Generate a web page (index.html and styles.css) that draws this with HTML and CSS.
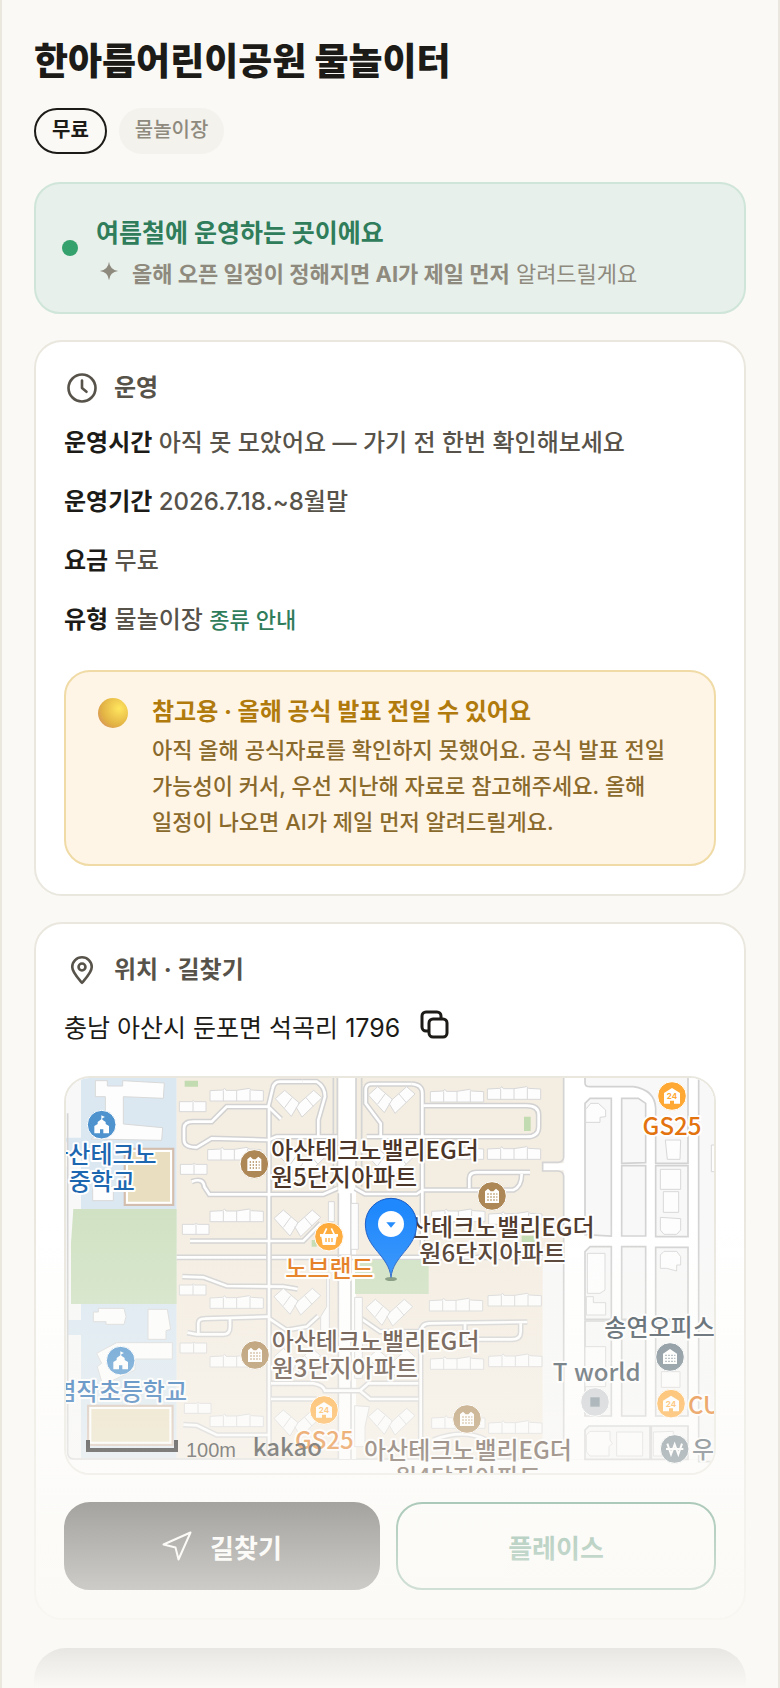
FILE: index.html
```html
<!DOCTYPE html>
<html lang="ko">
<head>
    <meta charset="UTF-8">
    <meta name="viewport" content="width=device-width, initial-scale=1.0">
    <title>한아름어린이공원 물놀이터</title>
    <link rel="stylesheet" href="styles.css">
</head>
<body>
    <main class="page">
        <h1>한아름어린이공원 물놀이터</h1>
        <div class="tags">
            <span class="tag tag-free">무료</span>
            <span class="tag">물놀이장</span>
        </div>

        <section class="status">
            <span class="status-dot"></span>
            <div>
                <p class="status-title">여름철에 운영하는 곳이에요</p>
                <p class="status-sub">
                    <svg class="spark" viewBox="0 0 24 24"><path d="M12 2 Q13 11 22 12 Q13 13 12 22 Q11 13 2 12 Q11 11 12 2 Z"/></svg>
                    <span><b>올해 오픈 일정이 정해지면 AI가 제일 먼저</b> 알려드릴게요</span>
                </p>
            </div>
        </section>

        <section class="card">
            <h2>
                <svg class="icon" viewBox="0 0 24 24"><circle cx="12" cy="12" r="9"/><path d="M12 7v5l3 2.500"/></svg>
                운영
            </h2>
            <div class="rows">
                <p><b>운영시간</b> 아직 못 모았어요 — 가기 전 한번 확인해보세요</p>
                <p><b>운영기간</b> 2026.7.18.~8월말</p>
                <p><b>요금</b> 무료</p>
                <p><b>유형</b> 물놀이장 <a href="#types">종류 안내</a></p>
            </div>
            <div class="notice">
                <span class="orb"></span>
                <div>
                    <p class="notice-title">참고용 · 올해 공식 발표 전일 수 있어요</p>
                    <p class="notice-text">아직 올해 공식자료를 확인하지 못했어요. 공식 발표 전일 가능성이 커서, 우선 지난해 자료로 참고해주세요. 올해 일정이 나오면 AI가 제일 먼저 알려드릴게요.</p>
                </div>
            </div>
        </section>

        <section class="card">
            <h2>
                <svg class="icon" viewBox="0 0 24 24"><path d="M12 20.500C9 17 5.500 13.500 5.500 10a6.500 6.500 0 0 1 13 0c0 3.500-3.500 7-6.500 10.500z"/><circle cx="12" cy="10" r="2.300"/></svg>
                위치 · 길찾기
            </h2>
            <div class="address">
                <span>충남 아산시 둔포면 석곡리 1796</span>
                <button type="button" class="copy" aria-label="주소 복사">
                    <svg viewBox="0 0 30 30"><rect x="9" y="9" width="18" height="18" rx="4"/><path d="M9 21H6a4 4 0 0 1-4-4V6a4 4 0 0 1 4-4h11a4 4 0 0 1 4 4v3"/></svg>
                </button>
            </div>

            <div class="map">
                <svg viewBox="48 54 1944 1185" preserveAspectRatio="xMidYMid slice">
                    <defs>
                        <g id="row4"><path d="M0 7 L38 5 L44 0 L48 6 H80 L118 0 L124 5 L160 7 V38 H0 Z M40 6 V38 M80 6 V38 M120 4 V38"/></g>
                        <g id="row2"><path d="M0 3 H36 L42 0 L46 3 H80 V33 H0 Z M41 3 V33"/></g>
                        <g id="vee"><path d="M0 25 L28 0 L72 38 L48 78 Z M28 52 L50 22 M68 42 L115 0 L140 22 L80 80 L62 50 M92 22 L114 48"/></g>
                        <g id="apt"><circle r="43"/><path class="glyph" d="M-21 21 V-14 L-12 -22 L-4 -14 H4 L12 -22 L21 -14 V21 Z"/><path class="dots" d="M-14 -6 H16 M-14 3 H16 M-14 12 H16"/></g>
                        <g id="school"><circle r="43"/><path class="glyph" d="M-22 26 V4 L-12 -2 V-8 L-1 -16 V-28 L10 -23 L2 -19 V-15 L12 -8 V-2 L22 4 V26 H5 V14 H-5 V26 Z"/></g>
                        <g id="store"><circle r="43"/><path class="glyph" d="M-24 23 V-9 L0 -24 L24 -9 V23 H6 V14 H-6 V23 Z"/></g>
                        <g id="roads">
                            <path d="M757 65 H690 Q672 65 668 85 L655 140 H530 L485 185 H430 Q402 185 402 205 V240 Q402 262 440 262 L485 235 L655 240 L680 230 H862"/>
                            <path d="M657 140 V1190 M655 140 L693 177"/>
                            <path d="M757 65 H800 Q825 80 825 110 L805 180 V228"/>
                            <path d="M425 365 Q460 352 463 380 L478 403 H820 L862 385"/>
                            <path d="M420 543 H760 L812 490"/>
                            <path d="M397 650 L460 652 L530 678 L700 680 L743 687"/>
                            <path d="M412 818 L440 823 H520 Q540 823 540 800 V778 M445 820 V790 Q445 776 465 776 L655 770"/>
                            <path d="M657 775 L710 810 L770 800 L805 768"/>
                            <path d="M400 1094 L440 1096 L500 1125 H655"/>
                            <path d="M663 970 H790 Q820 975 825 992 H930 L955 970 H1105 M663 1017 H800 M930 992 L960 1017 H1105"/>
                            <path d="M1085 72 H965 Q945 72 947 95 V130 L992 190 V230"/>
                            <path d="M1085 72 Q1117 74 1117 100 V560"/>
                            <path d="M1120 137 H1430 Q1466 137 1466 165 V200 Q1466 230 1430 230 H950"/>
                            <path d="M915 385 L945 402 H1100 L1118 390 H1390 Q1415 380 1415 342 M1258 385 V355 Q1258 337 1280 337 H1440"/>
                            <path d="M925 770 L990 815 H1110"/>
                            <path d="M1112 1190 V820 Q1112 790 1140 790 L1432 786 M1245 790 V838 H1385 Q1412 838 1412 815 V788"/>
                            <path d="M1150 1140 Q1240 1105 1310 1140"/>
                        </g>
                    </defs>

                    <!-- ground -->
                    <rect class="ground" x="48" y="54" width="1944" height="1185"/>
                    <path class="school-area" d="M93 54 H380 V447 H93 V290 H48 V233 H93 Z M93 732 H380 V1195 H93 V825 H53 V780 H93 Z"/>
                    <path class="beige" d="M380 54 H1540 V560 H1478 V1195 H380 Z"/>
                    <path class="green" d="M70 447 H380 V732 H63 V550 Z"/>
                    <path class="field" d="M224 266 H370 V435 H224 Z M114 1037 H368 V1155 H114 Z"/>
                    <path class="field-edge" d="M231 273 H363 V428 H231 Z M121 1044 H361 V1148 H121 Z"/>
                    <path class="lawn" d="M404 62 H444 V80 H404 Z M1422 170 H1442 V213 H1422 Z M1415 527 H1454 V547 H1415 Z M785 540 H800 V560 H785 Z"/>

                    <!-- streets -->
                    <path class="line" d="M53 160 V1180 Q55 1197 72 1197 H1478"/>
                    <path class="white" d="M53 1200 H1992 V1239 H53 Z M1543 54 H1992 V1197 H1543 Z M1478 310 H1545 V331 H1478 Z M865 54 H918 V1197 H865 Z"/>
                    <path class="cross-case" d="M380 592 H1478"/>
                    <path class="cross" d="M380 592 H1478"/>
                    <path class="line" d="M850 54 V390 M862 54 V380 M918 54 V380 M935 54 V380 M865 400 V1197 M903 400 V1197 M1541 54 V290 Q1541 305 1525 307 H1478 V333 H1525 Q1541 335 1541 350 V1180"/>
                    <use href="#roads" class="case"/>
                    <use href="#roads" class="street"/>
                    <path class="green" d="M915 600 H1136 V702 H915 Z"/>

                    <!-- city blocks -->
                    <g class="block">
                        <path d="M1605 54 V68 Q1605 80 1620 80 H1750 Q1815 90 1817 145 V310 H1914 V54"/>
                        <path d="M1605 130 L1620 115 H1684 V528 L1605 524 Z M1715 115 H1765 L1787 130 V308 L1715 310 Z M1715 317 H1787 V528 H1715 Z M1817 317 H1914 V530 H1817 Z"/>
                        <path d="M1605 575 L1620 560 H1684 V778 H1605 Z M1715 560 H1787 V778 H1715 Z M1817 562 H1914 V778 H1817 Z"/>
                        <path d="M1605 783 H1684 V1068 H1605 Z M1715 783 H1787 V1068 H1715 Z M1817 783 H1914 V1068 H1817 Z"/>
                        <path d="M1605 1110 L1617 1098 H1800 V1198 H1605 Z M1804 1098 H1914 V1198 H1804 Z M1946 54 H1999 V1205 H1946 Z"/>
                    </g>

                    <!-- buildings -->
                    <g class="building">
                        <path d="M136 62 H172 V78 H218 V62 L343 69 L340 115 L220 110 V192 L338 203 L335 241 L124 237 L166 200 V110 H136 Z"/>
                        <path d="M128 380 H190 V422 H128 Z M145 745 H222 L228 770 L222 793 H168 V785 H130 V756 H145 Z M294 748 H352 L362 808 L348 812 V838 H294 Z M200 848 H367 V897 H255 V930 L180 965 H155 L142 920 L155 910 L140 880 Z"/>
                        <path d="M835 425 H853 V485 H835 Z M903 430 H925 V568 H903 Z M914 712 H937 V955 H914 Z M914 1037 L958 1040 L945 1100 V1160 H914 Z M830 640 V740 L812 770 V850 H838 V640 Z"/>
                        <use href="#row4" x="480" y="85"/><use href="#row4" x="473" y="262"/><use href="#row4" x="480" y="447"/>
                        <use href="#row4" x="480" y="707"/><use href="#row4" x="480" y="883"/><use href="#row4" x="480" y="1062"/>
                        <use href="#row4" x="1141" y="88"/><use href="#row4" x="1312" y="80"/><use href="#row4" x="1141" y="260"/><use href="#row4" x="1312" y="260"/>
                        <use href="#row4" x="1145" y="447"/><use href="#row4" x="1316" y="455"/><use href="#row4" x="1138" y="715"/><use href="#row4" x="1314" y="700"/>
                        <use href="#row4" x="1141" y="890"/><use href="#row4" x="1316" y="882"/><use href="#row4" x="1145" y="1067"/><use href="#row4" x="1316" y="1082"/>
                        <use href="#row2" x="388" y="122"/><use href="#row2" x="391" y="310"/><use href="#row2" x="397" y="490"/>
                        <use href="#row2" x="388" y="672"/><use href="#row2" x="390" y="846"/><use href="#row2" x="403" y="1027"/>
                        <use href="#vee" x="676" y="91"/><use href="#vee" x="690" y="265"/><use href="#vee" x="672" y="450"/><use href="#vee" x="672" y="685"/>
                        <use href="#vee" x="672" y="865"/><use href="#vee" x="672" y="1050"/><use href="#vee" x="955" y="80"/><use href="#vee" x="955" y="265"/>
                        <use href="#vee" x="948" y="718"/><use href="#vee" x="955" y="868"/><use href="#vee" x="955" y="1045"/>
                        <path d="M1610 145 L1622 130 H1645 L1667 150 V170 L1650 172 V187 H1607 V145 Z M1846 240 H1892 L1890 298 H1852 Z M1831 328 H1892 V388 H1831 Z M1840 395 H1886 V457 H1840 Z M1831 472 L1892 476 V510 L1880 523 H1842 L1831 510 Z"/>
                        <path d="M1612 580 H1665 V690 L1650 700 H1612 Z M1609 710 H1630 V728 H1667 V765 H1609 Z M1831 585 L1842 574 H1880 L1892 590 V615 H1880 V633 L1850 625 H1831 Z M1605 860 H1667 V980 H1605 Z M1834 935 H1890 V982 H1834 Z"/>
                        <path d="M1609 1125 L1620 1114 H1680 V1140 L1687 1150 L1677 1160 V1188 H1620 L1609 1175 Z M1700 1116 H1778 V1188 H1700 Z M1810 1116 L1870 1114 V1188 H1810 Z M1984 255 H1999 V335 H1984 Z"/>
                    </g>

                    <!-- scale -->
                    <path class="scale" d="M114 1140 V1170 H378 V1140"/>
                    <text class="scale-text" x="408" y="1192">100m</text>

                    <!-- places -->
                    <use href="#school" class="poi poi-blue" x="155" y="194"/>
                    <text class="blue" x="320" y="309" text-anchor="end">아산테크노</text>
                    <text class="blue" x="56" y="391">중학교</text>
                    <use href="#apt" class="poi poi-brown" x="613" y="312"/>
                    <text x="663" y="298">아산테크노밸리EG더</text>
                    <text x="663" y="377">원5단지아파트</text>
                    <g class="poi poi-orange" transform="translate(837 530)">
                        <circle r="43"/>
                        <path class="glyph" d="M-27 -8 H27 V0 H23 L19 25 H-19 L-23 0 H-27 Z"/>
                        <path class="basket" d="M-16 -6 L-7 -25 M16 -6 L7 -25"/>
                        <path class="slots" d="M-9 4 V16 M0 4 V16 M9 4 V16"/>
                    </g>
                    <text class="orange" x="706" y="650">노브랜드</text>
                    <use href="#apt" class="poi poi-brown" x="1326" y="408"/>
                    <text x="1634" y="527" text-anchor="end">아산테크노밸리EG더</text>
                    <text x="1108" y="606">원6단지아파트</text>
                    <use href="#store" class="poi poi-orange" x="1866" y="108"/>
                    <text class="num" x="1866" y="117">24</text>
                    <text class="orange" x="1866" y="226" text-anchor="middle">GS25</text>
                    <use href="#apt" class="poi poi-brown" x="615" y="885"/>
                    <text x="665" y="871">아산테크노밸리EG더</text>
                    <text x="665" y="952">원3단지아파트</text>
                    <use href="#school" class="poi poi-blue" x="212" y="902"/>
                    <text class="blue" x="411" y="1019" text-anchor="end">염작초등학교</text>
                    <use href="#store" class="poi poi-orange" x="822" y="1050"/>
                    <text class="num" x="822" y="1059">24</text>
                    <text class="orange" x="823" y="1168" text-anchor="middle">GS25</text>
                    <text class="logo" x="608" y="1188">kakao</text>
                    <use href="#apt" class="poi poi-brown" x="1251" y="1077"/>
                    <text x="942" y="1198">아산테크노밸리EG더</text>
                    <text x="1035" y="1278">원4단지아파트</text>
                    <text class="gray" x="1663" y="827">송연오피스</text>
                    <g class="poi poi-gray" transform="translate(1860 891)">
                        <circle r="43"/>
                        <path class="glyph" d="M-21 21 V-10 L0 -24 L21 -10 V21 Z"/>
                        <path class="dots" d="M-14 -5 H16 M-14 4 H16 M-14 13 H16"/>
                    </g>
                    <text class="gray" x="1508" y="962">T world</text>
                    <g class="poi poi-light" transform="translate(1635 1026)">
                        <circle r="43"/>
                        <rect class="square" x="-14" y="-14" width="28" height="28"/>
                    </g>
                    <use href="#store" class="poi poi-orange" x="1863" y="1031"/>
                    <text class="num" x="1863" y="1040">24</text>
                    <text class="orange" x="1914" y="1061">CU</text>
                    <g class="poi poi-gray" transform="translate(1874 1167)">
                        <circle r="43"/>
                        <path class="won" d="M-22 -16 L-11 16 L0 -14 L11 16 L22 -16 M-26 0 H26"/>
                    </g>
                    <text class="gray" x="1926" y="1193">우</text>

                    <!-- marker -->
                    <ellipse class="shadow" cx="1023" cy="657" rx="18" ry="6"/>
                    <path class="pin" d="M1023 652 C1016 585 946 565 946 492 A77 77 0 0 1 1100 492 C1100 565 1030 585 1023 652 Z"/>
                    <circle class="pin-hole" cx="1023" cy="492" r="39"/>
                    <path class="pin-arrow" d="M1009 487 H1037 L1023 503 Z"/>
                </svg>
            </div>

            <div class="actions">
                <button type="button" class="btn btn-dark">
                    <svg viewBox="0 0 30 30"><path d="M28.500 1.500 L1.500 13.500 L13.500 16.500 L16.500 28.500 Z"/></svg>
                    길찾기
                </button>
                <button type="button" class="btn btn-line">플레이스</button>
            </div>
        </section>

        <div class="next-card"></div>
        <div class="fade"></div>
    </main>
</body>
</html>
```

FILE: styles.css
```css
* {
    box-sizing: border-box;
}

body {
    margin: 0;
    background: #faf9f5;
    color: #1c1b17;
    font-family: Inter, "Noto Sans CJK KR", sans-serif;
    font-size: 24px;
    line-height: 36px;
    word-break: keep-all;
}

h1, h2, p {
    margin: 0;
}

.page {
    position: relative;
    height: 100vh;
    overflow: hidden;
    padding: 36px 32px 0;
    border: solid #e9e7de;
    border-width: 0 2px;
}

h1 {
    font-size: 37px;
    line-height: 52px;
    font-weight: 800;
}

.tags {
    display: flex;
    gap: 12px;
    margin: 20px 0 28px;
}

.tag {
    height: 46px;
    padding: 0 16px;
    border-radius: 23px;
    background: #f3f2ed;
    color: #8f8a7e;
    font-size: 20px;
    line-height: 44px;
    font-weight: 500;
}

.tag-free {
    border: 2px solid #1c1b17;
    background: none;
    color: #1c1b17;
    line-height: 40px;
    font-weight: 700;
}

.status {
    display: flex;
    align-items: center;
    gap: 18px;
    height: 132px;
    padding: 0 26px;
    margin-bottom: 26px;
    border: 2px solid #cfe5d9;
    border-radius: 26px;
    background: #e7f0eb;
}

.status-dot {
    width: 16px;
    height: 16px;
    border-radius: 50%;
    background: #35a16c;
}

.status-title {
    padding-top: 10px;
    color: #2f7d5b;
    font-size: 25px;
    line-height: 42px;
    font-weight: 700;
}

.status-sub {
    display: flex;
    align-items: center;
    gap: 12px;
    padding-left: 2px;
    color: #8f8a7e;
    font-size: 22px;
    line-height: 40px;
}

.spark {
    width: 22px;
    height: 22px;
    margin-bottom: 6px;
    fill: #8f8a7e;
}

.card {
    padding: 28px;
    margin-bottom: 26px;
    border: 2px solid #e9e7de;
    border-radius: 28px;
    background: #fff;
}

h2 {
    display: flex;
    align-items: center;
    gap: 14px;
    height: 36px;
    color: #57534a;
    font-size: 24px;
    font-weight: 700;
}

.icon {
    width: 36px;
    height: 36px;
    fill: none;
    stroke: #57534a;
    stroke-width: 1.75;
    stroke-linecap: round;
    stroke-linejoin: round;
}

.rows {
    display: grid;
    gap: 20px;
    margin-top: 17px;
    color: #57534a;
    line-height: 39px;
    font-weight: 500;
}

.rows b {
    color: #1c1b17;
}

.rows a {
    color: #2f7d5b;
    font-size: 22px;
    text-decoration: none;
}

.notice {
    display: flex;
    gap: 24px;
    margin-top: 30px;
    padding: 20px 32px 24px;
    border: 2px solid #f0dba6;
    border-radius: 26px;
    background: #fff5e6;
}

.orb {
    flex: none;
    width: 30px;
    height: 30px;
    margin-top: 6px;
    border-radius: 50%;
    background: radial-gradient(circle at 70% 35%, #ffe65e, #e2b244 60%, #d0806a);
}

.notice-title {
    color: #b07a0c;
    font-size: 24px;
    line-height: 40px;
    font-weight: 700;
}

.notice-text {
    color: #8a6a2c;
    font-size: 22px;
    line-height: 36px;
    font-weight: 500;
}

.address {
    display: flex;
    align-items: flex-start;
    gap: 20px;
    margin: 22px 0 30px;
    font-size: 25px;
}

.copy {
    width: 30px;
    height: 30px;
    padding: 0;
    border: 0;
    background: none;
}

.copy svg {
    display: block;
    width: 30px;
    height: 30px;
    fill: none;
    stroke: #1c1b17;
    stroke-width: 3;
}

.map {
    overflow: hidden;
    height: 399px;
    border: 2px solid #e9e7de;
    border-radius: 26px;
}

.map svg {
    display: block;
    width: 100%;
    height: 100%;
}

.ground { fill: #f8f8f8; }
.school-area { fill: #dbe8f1; }
.beige { fill: #f4ede2; }
.green { fill: #d0e2c3; }
.lawn { fill: #c3dbb0; }
.white { fill: #fff; }

.field {
    fill: #e9dfc0;
    stroke: #d3bdaf;
    stroke-width: 6;
}

.field-edge {
    fill: none;
    stroke: #fff;
    stroke-width: 6;
}

.line {
    fill: none;
    stroke: #d4d4d4;
    stroke-width: 5;
}

.cross-case, .case {
    fill: none;
    stroke: #d2d2d2;
    stroke-width: 17;
}

.cross, .street {
    fill: none;
    stroke: #fff;
    stroke-width: 8;
}

.block {
    fill: #f8f8f8;
    stroke: #d2d2d2;
    stroke-width: 5;
}

.building {
    fill: #fdfdfd;
    stroke: #d8d8d8;
    stroke-width: 3;
}

.map text {
    fill: #4b3528;
    stroke: #fff;
    stroke-width: 12;
    stroke-linejoin: round;
    paint-order: stroke;
    font-family: "Noto Sans CJK KR", sans-serif;
    font-size: 72px;
    font-weight: 500;
}

.map .blue { fill: #1d66b0; }
.map .orange { fill: #e3730f; }
.map .gray { fill: #3f4d57; }

.map .num {
    fill: #ffa834;
    stroke: none;
    font-family: Inter, sans-serif;
    font-size: 24px;
    font-weight: 700;
    text-anchor: middle;
}

.map .logo {
    fill: #111;
    stroke: none;
}

.map .scale-text {
    fill: #111;
    stroke: none;
    font-family: "Liberation Sans", sans-serif;
    font-size: 60px;
    font-weight: 400;
}

.scale {
    fill: none;
    stroke: #000;
    stroke-width: 12;
}

.poi {
    stroke: #fff;
    stroke-width: 3;
}

.poi-blue { fill: #4e93ce; }
.poi-brown { fill: #ad8856; }
.poi-orange { fill: #ffa834; }
.poi-gray { fill: #6f808a; }
.poi-light { fill: #c9cdd2; }

.glyph {
    fill: #fff;
    stroke: none;
}

.dots {
    fill: none;
    stroke: #ad8856;
    stroke-width: 4;
    stroke-dasharray: 4 5;
}

.poi-gray .dots {
    stroke: #6f808a;
}

.basket {
    fill: none;
    stroke: #fff;
    stroke-width: 5;
}

.slots {
    stroke: #ffa834;
    stroke-width: 4;
}

.square {
    fill: #7c8c96;
    stroke: none;
}

.won {
    fill: none;
    stroke: #fff;
    stroke-width: 6;
}

.shadow { fill: #3c5a3c; opacity: 0.6; }

.pin {
    fill: #1e88fc;
    stroke: #1a5bc4;
    stroke-width: 3;
}

.pin-hole { fill: #fff; }
.pin-arrow { fill: #1e88fc; }

.actions {
    display: grid;
    grid-template-columns: 316fr 320fr;
    gap: 16px;
    margin-top: 27px;
}

.btn {
    display: flex;
    align-items: center;
    justify-content: center;
    gap: 18px;
    height: 88px;
    padding: 0;
    border: 2px solid #1c1b17;
    border-radius: 26px;
    font-family: inherit;
    font-size: 26px;
    font-weight: 700;
}

.btn svg {
    width: 30px;
    height: 30px;
    fill: none;
    stroke: #fff;
    stroke-width: 2;
    stroke-linejoin: round;
}

.btn-dark {
    background: #1c1b17;
    color: #fff;
}

.btn-line {
    border-color: #2f7d5b;
    background: #fff;
    color: #2f7d5b;
}

.next-card {
    height: 120px;
    margin-top: 28px;
    border-radius: 32px;
    background: #1c1b17;
}

.fade {
    position: absolute;
    left: 0;
    right: 0;
    bottom: 0;
    height: 480px;
    background: linear-gradient(rgba(250, 249, 245, 0), #faf9f5);
}
```
